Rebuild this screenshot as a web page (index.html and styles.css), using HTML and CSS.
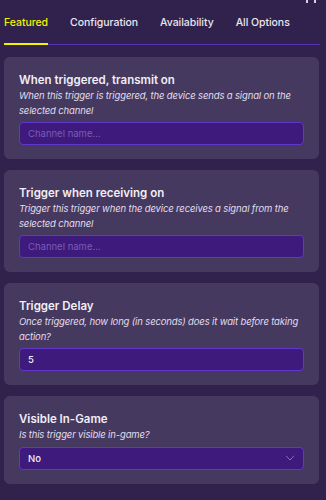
FILE: index.html
```html
<!DOCTYPE html>
<html>
<head>
<meta charset="utf-8">
<link rel="stylesheet" href="styles.css">
</head>
<body>
<div class="topbits"><span></span><span></span></div>
<nav class="tabs">
  <div class="tab active">Featured</div>
  <div class="tab">Configuration</div>
  <div class="tab">Availability</div>
  <div class="tab">All Options</div>
</nav>
<main class="list">
  <section class="card">
    <h3 class="title">When triggered, transmit on</h3>
    <p class="desc">When this trigger is triggered, the device sends a signal on the selected channel</p>
    <div class="field placeholder">Channel name...</div>
  </section>
  <section class="card">
    <h3 class="title">Trigger when receiving on</h3>
    <p class="desc">Trigger this trigger when the device receives a signal from the selected channel</p>
    <div class="field placeholder">Channel name...</div>
  </section>
  <section class="card">
    <h3 class="title">Trigger Delay</h3>
    <p class="desc">Once triggered, how long (in seconds) does it wait before taking action?</p>
    <div class="field value">5</div>
  </section>
  <section class="card">
    <h3 class="title">Visible In-Game</h3>
    <p class="desc">Is this trigger visible in-game?</p>
    <div class="field value select">
      <span>No</span>
      <svg class="chev" width="10" height="6" viewBox="0 0 10 6"><path d="M1 0.8 L5 5 L9 0.8" fill="none" stroke="#8a6fc4" stroke-width="1"/></svg>
    </div>
  </section>
</main>
</body>
</html>
```
FILE: styles.css
```css
html, body {
  margin: 0;
  padding: 0;
  background: #31224d;
  font-family: Inter, "Noto Sans", sans-serif;
  width: 326px;
  height: 500px;
  overflow: hidden;
  position: relative;
}
.topbits {
  position: absolute;
  top: 0;
  left: 306px;
  display: flex;
  gap: 6px;
}
.topbits span {
  width: 2px;
  height: 3px;
  background: #d8d0ea;
}
.tabs {
  display: flex;
  gap: 22px;
  margin: 0 6px 0 4px;
  padding-top: 16px;
  border-bottom: 1px solid #5a2fb8;
}
.tab {
  font-size: 10.5px;
  font-weight: 500;
  letter-spacing: -0.05px;
  color: #e9e6f0;
  line-height: 14px;
  padding-bottom: 13px;
  border-bottom: 2px solid transparent;
  margin-bottom: -1px;
}
.tab.active {
  color: #f5f000;
  border-bottom-color: #f5f000;
}
.list {
  display: flex;
  flex-direction: column;
  gap: 11px;
  padding: 12px 7px 0 4px;
}
.card {
  background: #45395f;
  border-radius: 6px;
  padding: 14px 15px 14px 15px;
}
.title {
  margin: 0;
  font-size: 11.5px;
  font-weight: 600;
  line-height: 18px;
  color: #f1eef6;
}
.desc {
  margin: 0 0 4px;
  font-size: 9.5px;
  font-style: italic;
  letter-spacing: -0.15px;
  line-height: 14.5px;
  color: #e2ddec;
}
.field {
  height: 23px;
  box-sizing: border-box;
  border: 1px solid #6236cc;
  background: #3d1a7c;
  border-radius: 4px;
  padding: 0 8px;
  display: flex;
  align-items: center;
  font-size: 9.5px;
}
.placeholder {
  color: #7a5cb8;
}
.value {
  color: #f1eef6;
  font-weight: 500;
}
.select {
  justify-content: space-between;
  padding-right: 8px;
}
.chev {
  display: block;
}
```
